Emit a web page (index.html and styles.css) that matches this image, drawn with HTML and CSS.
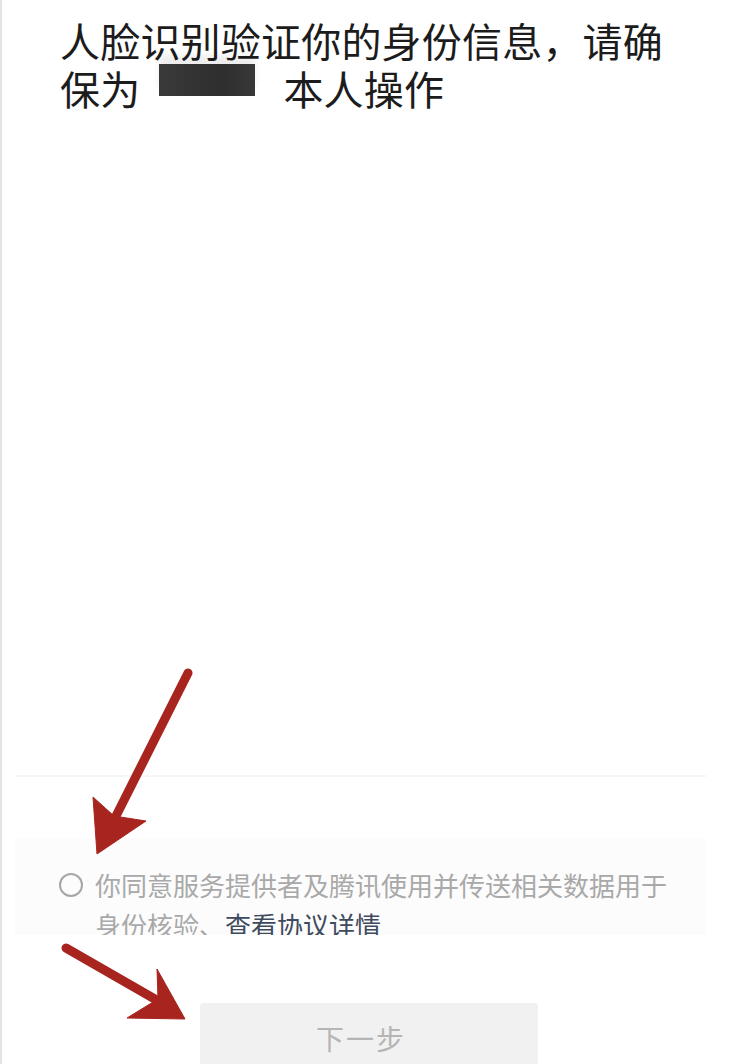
FILE: index.html
```html
<!DOCTYPE html>
<html lang="zh-CN">
<head>
<meta charset="utf-8">
<title>人脸识别</title>
<link rel="stylesheet" href="styles.css">
</head>
<body>
<div class="page">
  <h1 class="title">人脸识别验证你的身份信息，请确<br>保为<span class="redact"></span>本人操作</h1>
  <div class="spacer"></div>
  <div class="divider"></div>
  <div class="agree">
    <span class="radio"></span>
    <p class="agree-text">你同意服务提供者及腾讯使用并传送相关数据用于身份核验、<span class="link">查看协议详情</span></p>
  </div>
  <div class="actions">
    <div class="btn">下一步</div>
  </div>
  <svg class="annot" width="732" height="1064" viewBox="0 0 732 1064">
    <line x1="188" y1="673" x2="113" y2="822" class="shaft"/>
    <polygon points="93,797 114,816 146,821 97,854" class="head"/>
    <line x1="66" y1="948" x2="160" y2="1002" class="shaft"/>
    <polygon points="157,969 158,999 127,1018 185,1019" class="head"/>
  </svg>
</div>
</body>
</html>
```
FILE: styles.css
```css
html, body {
  margin: 0;
  padding: 0;
  background: #ffffff;
}
body {
  width: 732px;
  height: 1064px;
  overflow: hidden;
}
.page {
  position: relative;
  width: 730px;
  height: 1064px;
  overflow: hidden;
  border-left: 2px solid #e4e4e4;
  display: flex;
  flex-direction: column;
  font-family: "Noto Sans CJK SC", "Noto Sans", sans-serif;
}
.page > * {
  flex-shrink: 0;
}
.title {
  margin: 16px 0 0 58px;
  font-size: 40px;
  line-height: 48px;
  font-weight: 400;
  color: #1c1c1c;
  letter-spacing: 0.2px;
}
.redact {
  display: inline-block;
  vertical-align: top;
  width: 96px;
  height: 32px;
  margin: 0 28px 0 19px;
  background: linear-gradient(90deg, #3a3a3a 0%, #343434 33%, #2e2e2e 66%, #383838 100%);
  box-shadow: 0 -9px 7px rgba(0, 0, 0, 0.07);
}
.spacer {
  height: 663px;
}
.divider {
  margin: 0 26px 0 13px;
  height: 2px;
  background: #f6f6f4;
}
.agree {
  margin: 61px 26px 0 13px;
  height: 97px;
  overflow: hidden;
  background: #fcfcfc;
  display: flex;
  align-items: flex-start;
  padding: 27px 0 0 44px;
  box-sizing: border-box;
}
.radio {
  flex: none;
  width: 20px;
  height: 20px;
  border: 2px solid #a6a6a6;
  border-radius: 50%;
  margin-top: 8px;
  margin-right: 12px;
}
.agree-text {
  margin: 0;
  font-size: 26px;
  line-height: 40px;
  color: #a9a9a9;
  width: 580px;
}
.link {
  color: #3e4a5e;
}
.actions {
  margin-top: 68px;
  padding-left: 198px;
}
.btn {
  width: 338px;
  height: 70px;
  box-sizing: border-box;
  padding-right: 16px;
  background: #f1f1f1;
  border-radius: 4px;
  color: #b5b5b5;
  font-size: 28px;
  line-height: 70px;
  text-align: center;
  letter-spacing: 2px;
}
.annot {
  position: absolute;
  left: -2px;
  top: 0;
  pointer-events: none;
}
.shaft {
  stroke: #a8251f;
  stroke-width: 9;
  stroke-linecap: round;
}
.head {
  fill: #a8251f;
  stroke: #a8251f;
  stroke-width: 1;
  stroke-linejoin: miter;
}
```
